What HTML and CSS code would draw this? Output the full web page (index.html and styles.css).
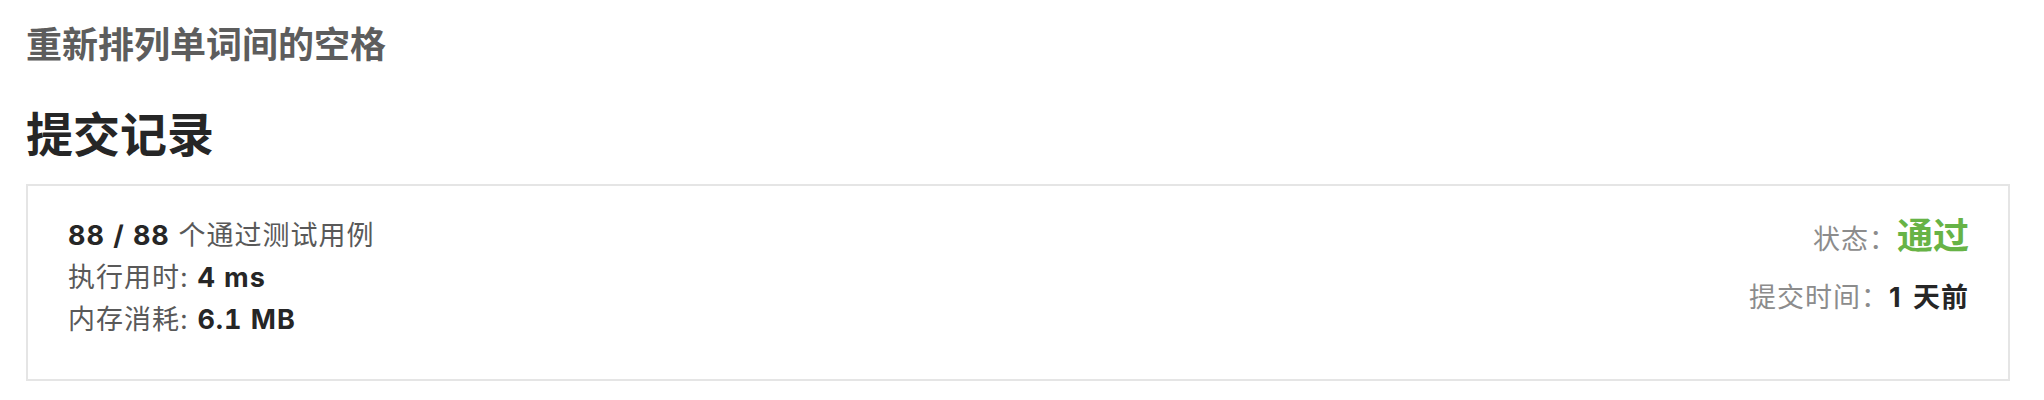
FILE: index.html
```html
<!DOCTYPE html>
<html lang="zh-CN">
<head>
<meta charset="utf-8">
<title>提交记录</title>
<link rel="stylesheet" href="styles.css">
</head>
<body>
<div class="page">
  <h2 class="problem-title">重新排列单词间的空格</h2>
  <h1 class="heading">提交记录</h1>
  <div class="card">
    <div class="stats">
      <div class="line"><b class="num">88 / 88</b> 个通过测试用例</div>
      <div class="line">执行用时: <b class="num">4 ms</b></div>
      <div class="line">内存消耗: <b class="num">6.1 MB</b></div>
    </div>
    <div class="meta">
      <div class="meta-row"><span class="label">状态：</span><span class="status">通过</span></div>
      <div class="meta-row"><span class="label">提交时间：</span><b class="num">1 天前</b></div>
    </div>
  </div>
</div>
</body>
</html>
```

FILE: styles.css
```css
html, body {
  margin: 0;
  padding: 0;
  background: #ffffff;
}

body {
  font-family: "Inter", "Noto Sans CJK SC", sans-serif;
}

.page {
  padding: 27px 34px 0 26px;
}

.problem-title {
  margin: 0;
  font-size: 36px;
  line-height: 36px;
  font-weight: 700;
  color: #5d5d5d;
}

.heading {
  margin: 48px 0 0 0;
  font-size: 47px;
  line-height: 47px;
  font-weight: 700;
  color: #262626;
}

.card {
  margin-top: 26px;
  border: 2px solid #e5e5e5;
  padding: 29px 39px 38px 40px;
  display: flex;
  justify-content: space-between;
  align-items: flex-start;
}

.stats {
  display: flex;
  flex-direction: column;
}

.line {
  font-size: 27px;
  line-height: 42px;
  letter-spacing: 1px;
  color: #595959;
}

.num {
  font-weight: 700;
  color: #262626;
  letter-spacing: 1px;
  font-feature-settings: "tnum" 1;
}

.meta {
  display: flex;
  flex-direction: column;
  align-items: flex-end;
  gap: 17px;
  padding-top: 1px;
}

.meta-row {
  font-size: 27px;
  line-height: 41px;
  letter-spacing: 1px;
  display: flex;
  align-items: baseline;
  white-space: pre;
}

.label {
  color: #8c8c8c;
}

.status {
  font-size: 36px;
  font-weight: 700;
  color: #67b346;
  letter-spacing: 0;
}

.meta-row .num {
  letter-spacing: 1px;
  word-spacing: 4px;
  font-feature-settings: normal;
}
```
